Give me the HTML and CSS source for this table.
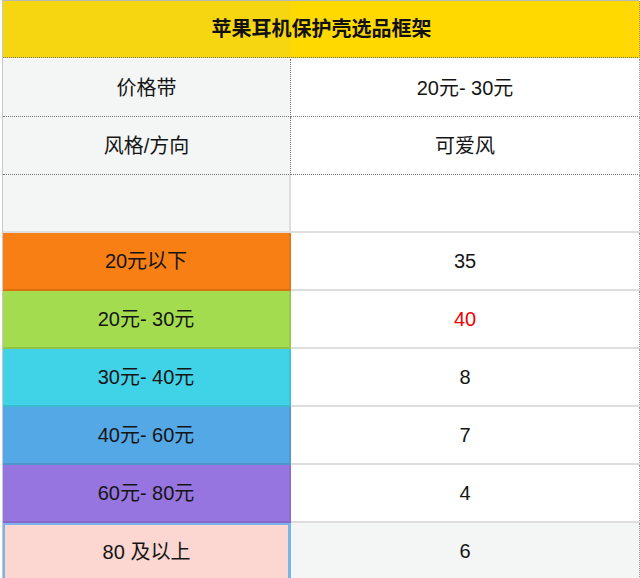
FILE: index.html
```html
<!DOCTYPE html>
<html lang="zh">
<head>
<meta charset="utf-8">
<title>苹果耳机保护壳选品框架</title>
<link rel="stylesheet" href="styles.css">
</head>
<body>
<div class="sheet">
  <div class="cell title">苹果耳机保护壳选品框架</div>

  <div class="cell lab dot">价格带</div>
  <div class="cell val dot">20元- 30元</div>

  <div class="cell lab dot">风格/方向</div>
  <div class="cell val dot">可爱风</div>

  <div class="cell lab dot last-dot"></div>
  <div class="cell val dot last-dot"></div>

  <div class="cell band c-orange">20元以下</div>
  <div class="cell num">35</div>

  <div class="cell band c-green">20元- 30元</div>
  <div class="cell num red">40</div>

  <div class="cell band c-cyan">30元- 40元</div>
  <div class="cell num">8</div>

  <div class="cell band c-blue">40元- 60元</div>
  <div class="cell num">7</div>

  <div class="cell band c-purple">60元- 80元</div>
  <div class="cell num">4</div>

  <div class="cell band c-pink selected">80 及以上<span class="handle"></span></div>
  <div class="cell num grey">6</div>
</div>
</body>
</html>
```

FILE: styles.css
```css
html, body {
  margin: 0;
  padding: 0;
  background: #ffffff;
}

body {
  font-family: "Liberation Sans", "Noto Sans CJK SC", sans-serif;
  font-size: 20px;
  line-height: 22px;
  color: #151515;
  height: 578px;
  overflow: hidden;
}

.sheet {
  margin-left: 2px;
  width: 637px;
  border-left: 1px solid #c9c9c9;
  border-top: 1px solid #b9b9b9;
  display: grid;
  grid-template-columns: 288px 349px;
  grid-auto-rows: 58px;
  box-sizing: border-box;
}

.cell {
  box-sizing: border-box;
  display: flex;
  align-items: center;
  justify-content: center;
  position: relative;
}

.title {
  grid-column: 1 / 3;
  height: 57px;
  font-weight: bold;
  font-size: 20px;
  color: #111;
  padding-left: 1px;
  background: linear-gradient(to right, #f5d611 0, #f5d611 288px, #ffd900 288px);
  border-bottom: 1px dotted #6f7480;
  border-right: 1px dotted #a59a55;
}

.lab {
  background: #f4f6f5;
  border-right: 1px dotted #777;
}

.val {
  background: #ffffff;
  border-right: 1px dotted #999;
}

.dot {
  border-bottom: 1px dotted #777;
}

.last-dot {
  border-bottom: 2px solid #dedede;
}

.lab.last-dot {
  border-right: 2px solid #dedede;
}

.band {
  border-bottom: 2px solid rgba(0, 0, 0, 0.1);
  border-right: 2px solid rgba(0, 0, 0, 0.07);
}

.num {
  background: #ffffff;
  border-bottom: 2px solid #dddddd;
  border-right: 1px dotted #999;
}

.red {
  color: #f00000;
}

.grey {
  background: #f4f6f5;
}

.c-orange { background: #f77f14; }
.c-green  { background: #a3dc4f; }
.c-cyan   { background: #40d3e8; }
.c-blue   { background: #55a8e6; }
.c-purple { background: #9775e0; }
.c-pink   { background: #fcd6d0; }

.selected {
  border: 2px solid #79b3ea;
  border-right-width: 3px;
}

.handle {
  position: absolute;
  right: -4px;
  bottom: -2px;
  width: 6px;
  height: 2px;
  background: #79b3ea;
}
```
